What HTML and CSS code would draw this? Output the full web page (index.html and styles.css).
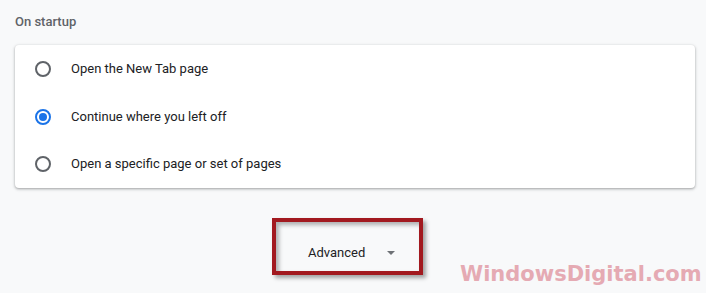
FILE: index.html
```html
<!DOCTYPE html>
<html lang="en">
<head>
  <meta charset="UTF-8" />
  <title>On startup</title>
  <link rel="stylesheet" href="styles.css">
</head>
<body>

<div class="section-title">On startup</div>

<div class="card">
  <label class="radio-row">
    <span class="radio"></span>
    <span class="radio-label">Open the New Tab page</span>
  </label>
  <label class="radio-row">
    <span class="radio checked"></span>
    <span class="radio-label">Continue where you left off</span>
  </label>
  <label class="radio-row">
    <span class="radio"></span>
    <span class="radio-label">Open a specific page or set of pages</span>
  </label>
</div>

<div class="advanced-row">
  <div class="highlight">
    <button class="advanced-btn">
      <span>Advanced</span>
      <span class="arrow"></span>
    </button>
  </div>
</div>

<div class="watermark">WindowsDigital.com</div>

</body>
</html>
```

FILE: styles.css
```css
body {
  margin: 0;
  padding: 0 11px 0 15px;
  background: #f8f9fa;
  font-family: Roboto, "Liberation Sans", sans-serif;
  font-size: 13px;
  color: #202124;
  height: 293px;
  box-sizing: border-box;
  position: relative;
  overflow: hidden;
}
.section-title {
  padding-top: 12px;
  line-height: 20px;
  font-weight: 500;
  color: #5f6368;
  margin-bottom: 13px;
}
.card {
  background: #fff;
  border-radius: 4px;
  box-shadow: 0 1px 2px rgba(60,64,67,0.3), 0 1px 3px 1px rgba(60,64,67,0.15);
}
.radio-row {
  display: flex;
  align-items: center;
  height: 48px;
  padding-left: 20px;
}
.radio-row:nth-child(2) {
  height: 47px;
}
.radio {
  width: 16px;
  height: 16px;
  border: 2px solid #5f6368;
  border-radius: 50%;
  box-sizing: border-box;
  margin-right: 20px;
  position: relative;
}
.radio.checked {
  border-color: #1a73e8;
}
.radio.checked::after {
  content: "";
  position: absolute;
  left: 2px;
  top: 2px;
  width: 8px;
  height: 8px;
  border-radius: 50%;
  background: #1a73e8;
}
.radio-label {
  line-height: 20px;
}
.advanced-row {
  margin-top: 30px;
  padding-left: 257px;
}
.highlight {
  display: inline-block;
  width: 151px;
  height: 57px;
  box-sizing: border-box;
  border: 4px solid #a2191f;
  box-shadow: 3px 3px 4px rgba(0,0,0,0.35), inset 3px 3px 4px rgba(0,0,0,0.3);
}
.advanced-btn {
  display: flex;
  align-items: center;
  margin: 21px 0 0 32px;
  padding: 0;
  border: none;
  background: none;
  font: inherit;
  color: #202124;
  line-height: 20px;
}
.arrow {
  margin-left: 22px;
  width: 0;
  height: 0;
  border-left: 4px solid transparent;
  border-right: 4px solid transparent;
  border-top: 4px solid #6e7276;
}
.watermark {
  position: absolute;
  left: 460px;
  top: 262px;
  font-family: "DejaVu Sans", sans-serif;
  font-weight: bold;
  font-size: 21px;
  color: #e5aab3;
}
```
